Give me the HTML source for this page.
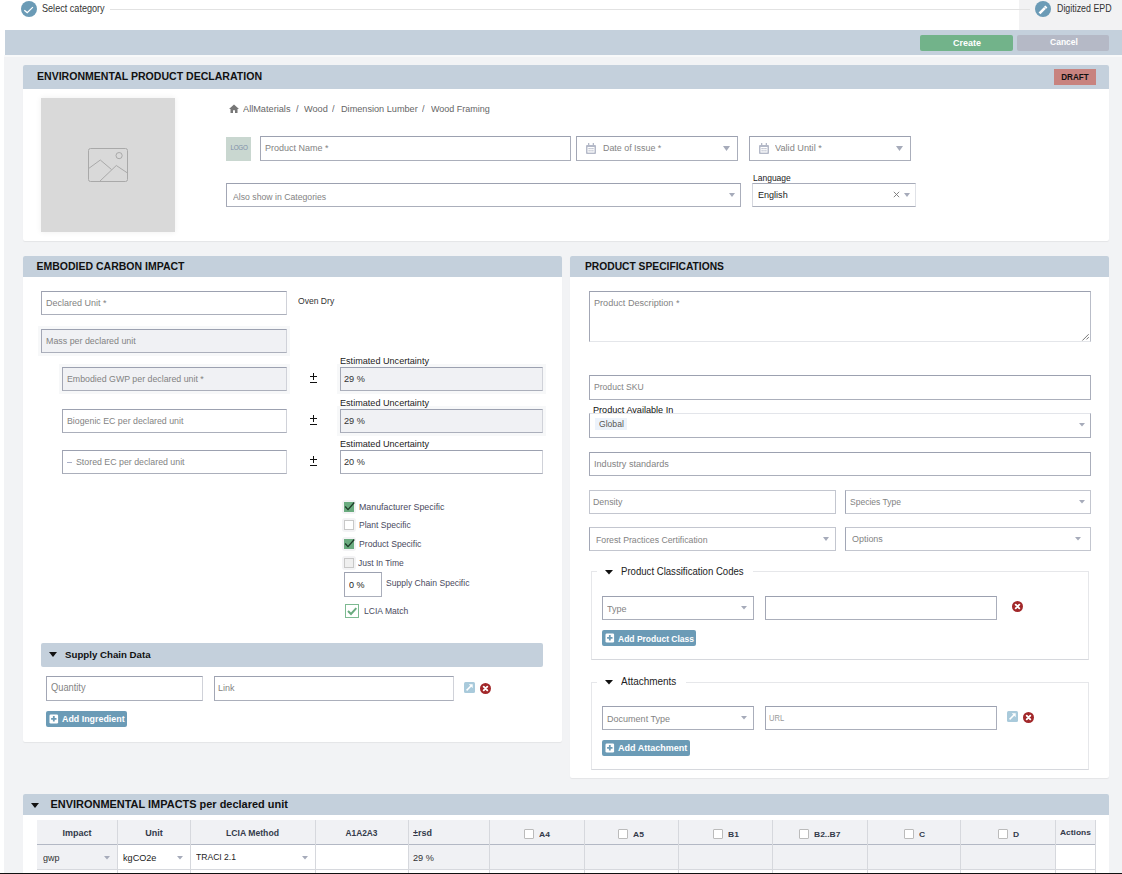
<!DOCTYPE html>
<html><head><meta charset="utf-8"><title>EPD</title>
<style>
html,body{margin:0;padding:0;}
body{width:1122px;height:874px;overflow:hidden;position:relative;background:#fff;font-family:"Liberation Sans",sans-serif;}
div{position:absolute;}
.t{position:absolute;line-height:1;white-space:pre;font-family:"Liberation Sans",sans-serif;}
svg{position:absolute;}
</style></head><body>
<div style="left:1019px;top:0px;width:103px;height:30px;background:#f2f2f3"></div>
<div style="left:110px;top:9px;width:920px;height:1px;background:#e2e2e2"></div>
<svg style="position:absolute;left:21px;top:1px" width="16" height="16" viewBox="0 0 16 16"><circle cx="8" cy="8" r="8" fill="#6b9bb6"/><path d="M3.3 9.3L6.2 11.6L11.9 6.1" stroke="#fff" stroke-width="1.3" fill="none"/></svg>
<span class="t" style="left:42px;top:4.14px;font-size:10.46px;font-weight:400;color:#333;transform:scaleX(0.8696);transform-origin:0 0;">Select category</span>
<svg style="position:absolute;left:1035px;top:1px" width="16" height="16" viewBox="0 0 16 16"><circle cx="8" cy="8" r="8" fill="#6b9bb6"/><path d="M4.5 12.3L10 6.8" stroke="#fff" stroke-width="2.6"/><path d="M10.3 4.4L12.4 6.5L11.2 7.7L9.1 5.6Z" fill="#fff"/></svg>
<span class="t" style="left:1057px;top:4.38px;font-size:10.18px;font-weight:400;color:#333;transform:scaleX(0.8696);transform-origin:0 0;">Digitized EPD</span>
<div style="left:4px;top:57px;width:1118px;height:817px;background:#f2f3f5"></div>
<div style="left:5px;top:30px;width:1117px;height:25px;background:#c4d0dc"></div>
<div style="left:4px;top:55px;width:1118px;height:2px;background:#f8f9fa"></div>
<div style="left:920px;top:35px;width:93px;height:16px;background:#72b38a;border-radius:2px"></div>
<span class="t" style="left:766.5px;width:400px;text-align:center;top:37.62px;font-size:9.90px;font-weight:700;color:#fff;transform:scaleX(0.9091);transform-origin:50% 0;">Create</span>
<div style="left:1017px;top:35px;width:92px;height:16px;background:#b5b9c6;border-radius:2px"></div>
<span class="t" style="left:863.5px;width:400px;text-align:center;top:38.09px;font-size:9.35px;font-weight:700;color:#fff;transform:scaleX(0.9091);transform-origin:50% 0;">Cancel</span>
<div style="left:23px;top:65px;width:1086px;height:176px;background:#fff;border-radius:2px;box-shadow:0 1px 1px rgba(0,0,0,0.06)"></div>
<div style="left:23px;top:65px;width:1086px;height:24px;background:#c4d0dc;border-radius:2px 2px 0 0"></div>
<span class="t" style="left:37px;top:71.07px;font-size:10.55px;font-weight:700;color:#111;">ENVIRONMENTAL PRODUCT DECLARATION</span>
<div style="left:1054px;top:69px;width:42px;height:16px;background:#c8837f"></div>
<span class="t" style="left:875px;width:400px;text-align:center;top:72.73px;font-size:8.59px;font-weight:700;color:#111;transform:scaleX(0.9434);transform-origin:50% 0;">DRAFT</span>
<div style="left:41px;top:98px;width:134px;height:134px;background:#d9d9d9;box-shadow:0 0 6px rgba(0,0,0,0.07)"></div>
<svg style="position:absolute;left:88px;top:148px" width="40" height="34" viewBox="0 0 40 34"><rect x="0.5" y="0.5" width="39" height="33" rx="2" fill="none" stroke="#a9a9a9" stroke-width="1"/><circle cx="31.1" cy="7.6" r="3.1" fill="none" stroke="#a9a9a9"/><path d="M0.5 20.6L12.3 12L23.5 21.5" fill="none" stroke="#a9a9a9"/><path d="M11.5 33.5L28.3 17.5L39.5 25" fill="none" stroke="#a9a9a9"/></svg>
<svg style="position:absolute;left:229px;top:104px" width="10" height="9" viewBox="0 0 10 9"><path d="M5 0.5L0 5H1.5V9H4V6.2H6V9H8.5V5H10Z" fill="#777"/></svg>
<span class="t" style="left:243px;top:104.09px;font-size:9.94px;font-weight:400;color:#666;transform:scaleX(0.9259);transform-origin:0 0;">AllMaterials</span>
<span class="t" style="left:296px;top:104.09px;font-size:9.94px;font-weight:400;color:#666;transform:scaleX(0.9259);transform-origin:0 0;">/</span>
<span class="t" style="left:304px;top:104.09px;font-size:9.94px;font-weight:400;color:#666;transform:scaleX(0.9259);transform-origin:0 0;">Wood</span>
<span class="t" style="left:332px;top:104.09px;font-size:9.94px;font-weight:400;color:#666;transform:scaleX(0.9259);transform-origin:0 0;">/</span>
<span class="t" style="left:340.5px;top:104.13px;font-size:9.88px;font-weight:400;color:#666;transform:scaleX(0.9259);transform-origin:0 0;">Dimension Lumber</span>
<span class="t" style="left:422px;top:104.09px;font-size:9.94px;font-weight:400;color:#666;transform:scaleX(0.9259);transform-origin:0 0;">/</span>
<span class="t" style="left:430.5px;top:104.27px;font-size:9.72px;font-weight:400;color:#666;transform:scaleX(0.9259);transform-origin:0 0;">Wood Framing</span>
<div style="left:226px;top:137px;width:25px;height:24px;background:#c9d7d0"></div>
<span class="t" style="left:38.5px;width:400px;text-align:center;top:145.24px;font-size:6.80px;font-weight:400;color:#7f8fa9;transform:scaleX(0.9259);transform-origin:50% 0;letter-spacing:-0.3px">LOGO</span>
<div style="left:260px;top:136px;width:311px;height:25px;box-sizing:border-box;border:1px solid #9ca1b0;border-left-color:#a3a7b5;border-bottom-color:#abafbb;border-right-color:#aaaebb;background:#fff;"></div>
<span class="t" style="left:264.5px;top:143.27px;font-size:9.72px;font-weight:400;color:#838383;transform:scaleX(0.9259);transform-origin:0 0;">Product Name *</span>
<div style="left:576px;top:136px;width:162px;height:25px;box-sizing:border-box;border:1px solid #9ca1b0;border-left-color:#a3a7b5;border-bottom-color:#abafbb;border-right-color:#aaaebb;background:#fff;"></div>
<svg style="position:absolute;left:586px;top:143px" width="10" height="11" viewBox="0 0 10 11"><rect x="0" y="2" width="10" height="9" rx="1" fill="#b4b9c8"/><rect x="1.5" y="4" width="7" height="5.6" fill="#fff"/><rect x="2" y="0" width="1.3" height="3" fill="#b4b9c8"/><rect x="6.7" y="0" width="1.3" height="3" fill="#b4b9c8"/><rect x="2.5" y="5.0" width="1.2" height="1.2" fill="#aeb3c3"/><rect x="2.5" y="7.2" width="1.2" height="1.2" fill="#aeb3c3"/><rect x="4.4" y="5.0" width="1.2" height="1.2" fill="#aeb3c3"/><rect x="4.4" y="7.2" width="1.2" height="1.2" fill="#aeb3c3"/><rect x="6.3" y="5.0" width="1.2" height="1.2" fill="#aeb3c3"/><rect x="6.3" y="7.2" width="1.2" height="1.2" fill="#aeb3c3"/></svg>
<span class="t" style="left:603px;top:143.36px;font-size:9.61px;font-weight:400;color:#838383;transform:scaleX(0.9259);transform-origin:0 0;">Date of Issue *</span>
<svg style="position:absolute;left:723px;top:146px" width="7" height="5" viewBox="0 0 7 5"><path d="M0 0H7L3.5 5Z" fill="#a6abba"/></svg>
<div style="left:749px;top:136px;width:162px;height:25px;box-sizing:border-box;border:1px solid #9ca1b0;border-left-color:#a3a7b5;border-bottom-color:#abafbb;border-right-color:#aaaebb;background:#fff;"></div>
<svg style="position:absolute;left:759px;top:143px" width="10" height="11" viewBox="0 0 10 11"><rect x="0" y="2" width="10" height="9" rx="1" fill="#b4b9c8"/><rect x="1.5" y="4" width="7" height="5.6" fill="#fff"/><rect x="2" y="0" width="1.3" height="3" fill="#b4b9c8"/><rect x="6.7" y="0" width="1.3" height="3" fill="#b4b9c8"/><rect x="2.5" y="5.0" width="1.2" height="1.2" fill="#aeb3c3"/><rect x="2.5" y="7.2" width="1.2" height="1.2" fill="#aeb3c3"/><rect x="4.4" y="5.0" width="1.2" height="1.2" fill="#aeb3c3"/><rect x="4.4" y="7.2" width="1.2" height="1.2" fill="#aeb3c3"/><rect x="6.3" y="5.0" width="1.2" height="1.2" fill="#aeb3c3"/><rect x="6.3" y="7.2" width="1.2" height="1.2" fill="#aeb3c3"/></svg>
<span class="t" style="left:775px;top:143.09px;font-size:9.94px;font-weight:400;color:#838383;transform:scaleX(0.9259);transform-origin:0 0;">Valid Until *</span>
<svg style="position:absolute;left:896px;top:146px" width="7" height="5" viewBox="0 0 7 5"><path d="M0 0H7L3.5 5Z" fill="#a6abba"/></svg>
<div style="left:226px;top:183px;width:515px;height:24px;box-sizing:border-box;border:1px solid #9ca1b0;border-left-color:#a3a7b5;border-bottom-color:#abafbb;border-right-color:#aaaebb;background:#fff;"></div>
<span class="t" style="left:233px;top:191.55px;font-size:9.40px;font-weight:400;color:#838383;transform:scaleX(0.9259);transform-origin:0 0;">Also show in Categories</span>
<svg style="position:absolute;left:729px;top:193px" width="6" height="4" viewBox="0 0 6 4"><path d="M0 0H6L3.0 4Z" fill="#a6abba"/></svg>
<div style="left:752px;top:183px;width:164px;height:24px;box-sizing:border-box;border:1px solid #9ca1b0;border-left-color:#a3a7b5;border-bottom-color:#abafbb;border-right-color:#aaaebb;background:#fff;border-left-color:#d5d7de;border-right-color:#e0e2e7;border-top-color:#a7abb9"></div>
<span class="t" style="left:752.5px;top:173.73px;font-size:9.18px;font-weight:400;color:#222;transform:scaleX(0.9259);transform-origin:0 0;">Language</span>
<span class="t" style="left:758px;top:190.23px;font-size:9.77px;font-weight:400;color:#222;transform:scaleX(0.9259);transform-origin:0 0;">English</span>
<svg style="position:absolute;left:893px;top:191px" width="7" height="7" viewBox="0 0 7 7"><path d="M0.8 0.8L6.2 6.2M6.2 0.8L0.8 6.2" stroke="#777" stroke-width="0.9"/></svg>
<svg style="position:absolute;left:904px;top:193px" width="6" height="4" viewBox="0 0 6 4"><path d="M0 0H6L3.0 4Z" fill="#a6abba"/></svg>
<div style="left:23px;top:256px;width:539px;height:486px;background:#fff;border-radius:2px;box-shadow:0 1px 1px rgba(0,0,0,0.06)"></div>
<div style="left:23px;top:256px;width:539px;height:21px;background:#c4d0dc;border-radius:2px 2px 0 0"></div>
<span class="t" style="left:36.5px;top:261.11px;font-size:10.50px;font-weight:700;color:#111;">EMBODIED CARBON IMPACT</span>
<div style="left:41px;top:291px;width:246px;height:24px;box-sizing:border-box;border:1px solid #9ca1b0;border-left-color:#a3a7b5;border-bottom-color:#abafbb;border-right-color:#aaaebb;background:#fff;border-right-color:#d0d2d9"></div>
<span class="t" style="left:45.5px;top:298.27px;font-size:9.72px;font-weight:400;color:#838383;transform:scaleX(0.9259);transform-origin:0 0;">Declared Unit *</span>
<span class="t" style="left:297.5px;top:296.67px;font-size:9.26px;font-weight:400;color:#333;transform:scaleX(0.9259);transform-origin:0 0;">Oven Dry</span>
<div style="left:38px;top:326px;width:252px;height:30px;background:#f7f8f9"></div>
<div style="left:41px;top:329px;width:246px;height:24px;box-sizing:border-box;border:1px solid #9ca1b0;border-left-color:#a3a7b5;border-bottom-color:#abafbb;border-right-color:#aaaebb;background:#f0f1f4;border-right-color:#d0d2d9"></div>
<span class="t" style="left:45.5px;top:336.38px;font-size:9.59px;font-weight:400;color:#838383;transform:scaleX(0.9259);transform-origin:0 0;">Mass per declared unit</span>
<div style="left:59px;top:364px;width:231px;height:30px;background:#f7f8f9"></div>
<div style="left:62px;top:367px;width:225px;height:24px;box-sizing:border-box;border:1px solid #9ca1b0;border-left-color:#a3a7b5;border-bottom-color:#abafbb;border-right-color:#aaaebb;background:#f0f1f4;border-right-color:#d0d2d9"></div>
<span class="t" style="left:66.5px;top:374.45px;font-size:9.50px;font-weight:400;color:#838383;transform:scaleX(0.9259);transform-origin:0 0;">Embodied GWP per declared unit *</span>
<div style="left:310px;top:376px;width:7px;height:1px;background:#111"></div>
<div style="left:313px;top:373px;width:1px;height:7px;background:#111"></div>
<div style="left:310px;top:382px;width:7px;height:1px;background:#111"></div>
<div style="left:62px;top:409px;width:225px;height:24px;box-sizing:border-box;border:1px solid #9ca1b0;border-left-color:#a3a7b5;border-bottom-color:#abafbb;border-right-color:#aaaebb;background:#fff;border-right-color:#d0d2d9"></div>
<span class="t" style="left:66.5px;top:416.45px;font-size:9.50px;font-weight:400;color:#838383;transform:scaleX(0.9259);transform-origin:0 0;">Biogenic EC per declared unit</span>
<div style="left:310px;top:418px;width:7px;height:1px;background:#111"></div>
<div style="left:313px;top:415px;width:1px;height:7px;background:#111"></div>
<div style="left:310px;top:424px;width:7px;height:1px;background:#111"></div>
<div style="left:62px;top:450px;width:225px;height:24px;box-sizing:border-box;border:1px solid #9ca1b0;border-left-color:#a3a7b5;border-bottom-color:#abafbb;border-right-color:#aaaebb;background:#fff;border-right-color:#d0d2d9"></div>
<span class="t" style="left:76px;top:457.45px;font-size:9.50px;font-weight:400;color:#838383;transform:scaleX(0.9259);transform-origin:0 0;">Stored EC per declared unit</span>
<div style="left:310px;top:459px;width:7px;height:1px;background:#111"></div>
<div style="left:313px;top:456px;width:1px;height:7px;background:#111"></div>
<div style="left:310px;top:465px;width:7px;height:1px;background:#111"></div>
<div style="left:337px;top:364px;width:209px;height:30px;background:#f7f8f9"></div>
<div style="left:340px;top:367px;width:203px;height:24px;box-sizing:border-box;border:1px solid #9ca1b0;border-left-color:#a3a7b5;border-bottom-color:#abafbb;border-right-color:#aaaebb;background:#f0f1f4;border-right-color:#d0d2d9"></div>
<span class="t" style="left:340px;top:356.18px;font-size:9.83px;font-weight:400;color:#222;transform:scaleX(0.9259);transform-origin:0 0;">Estimated Uncertainty</span>
<span class="t" style="left:343.5px;top:374.09px;font-size:9.94px;font-weight:400;color:#333;transform:scaleX(0.9259);transform-origin:0 0;">29 %</span>
<div style="left:337px;top:406px;width:209px;height:30px;background:#f7f8f9"></div>
<div style="left:340px;top:409px;width:203px;height:24px;box-sizing:border-box;border:1px solid #9ca1b0;border-left-color:#a3a7b5;border-bottom-color:#abafbb;border-right-color:#aaaebb;background:#f0f1f4;border-right-color:#d0d2d9"></div>
<span class="t" style="left:340px;top:398.18px;font-size:9.83px;font-weight:400;color:#222;transform:scaleX(0.9259);transform-origin:0 0;">Estimated Uncertainty</span>
<span class="t" style="left:343.5px;top:416.09px;font-size:9.94px;font-weight:400;color:#333;transform:scaleX(0.9259);transform-origin:0 0;">29 %</span>
<div style="left:340px;top:450px;width:203px;height:24px;box-sizing:border-box;border:1px solid #9ca1b0;border-left-color:#a3a7b5;border-bottom-color:#abafbb;border-right-color:#aaaebb;background:#fff;border-right-color:#d0d2d9"></div>
<span class="t" style="left:340px;top:439.18px;font-size:9.83px;font-weight:400;color:#222;transform:scaleX(0.9259);transform-origin:0 0;">Estimated Uncertainty</span>
<span class="t" style="left:343.5px;top:457.09px;font-size:9.94px;font-weight:400;color:#333;transform:scaleX(0.9259);transform-origin:0 0;">20 %</span>
<div style="left:67px;top:462px;width:5px;height:1px;background:#aab0c8"></div>
<div style="left:342px;top:500px;width:14px;height:14px;background:#f3f3f5;border-radius:3px"></div>
<div style="left:344px;top:502px;width:10px;height:10px;box-sizing:border-box;background:#6aab7f;border:1px solid #6aab7f"></div>
<svg style="position:absolute;left:344px;top:501px" width="11" height="11" viewBox="0 0 11 11"><path d="M1.2 5.5L4 8.6L10.3 1.5" stroke="#1d3a28" stroke-width="1.3" fill="none"/></svg>
<span class="t" style="left:358.5px;top:502.42px;font-size:9.55px;font-weight:400;color:#4a4a5e;transform:scaleX(0.9259);transform-origin:0 0;">Manufacturer Specific</span>
<div style="left:342px;top:518px;width:14px;height:14px;background:#f3f3f5;border-radius:3px"></div>
<div style="left:344px;top:520px;width:10px;height:10px;box-sizing:border-box;background:#fff;border:1px solid #c8c8c8"></div>
<span class="t" style="left:358.5px;top:520.68px;font-size:9.23px;font-weight:400;color:#4a4a5e;transform:scaleX(0.9259);transform-origin:0 0;">Plant Specific</span>
<div style="left:342px;top:537px;width:14px;height:14px;background:#f3f3f5;border-radius:3px"></div>
<div style="left:344px;top:539px;width:10px;height:10px;box-sizing:border-box;background:#6aab7f;border:1px solid #6aab7f"></div>
<svg style="position:absolute;left:344px;top:538px" width="11" height="11" viewBox="0 0 11 11"><path d="M1.2 5.5L4 8.6L10.3 1.5" stroke="#1d3a28" stroke-width="1.3" fill="none"/></svg>
<span class="t" style="left:358.5px;top:539.59px;font-size:9.34px;font-weight:400;color:#4a4a5e;transform:scaleX(0.9259);transform-origin:0 0;">Product Specific</span>
<div style="left:342px;top:556px;width:14px;height:14px;background:#f3f3f5;border-radius:3px"></div>
<div style="left:344px;top:558px;width:10px;height:10px;box-sizing:border-box;background:#efefef;border:1px solid #c8c8c8"></div>
<span class="t" style="left:358px;top:558.72px;font-size:9.19px;font-weight:400;color:#4a4a5e;transform:scaleX(0.9259);transform-origin:0 0;">Just In Time</span>
<div style="left:344px;top:572px;width:38px;height:25px;box-sizing:border-box;border:1px solid #9ca1b0;border-left-color:#a3a7b5;border-bottom-color:#abafbb;border-right-color:#aaaebb;background:#fff;"></div>
<span class="t" style="left:348.5px;top:579.77px;font-size:9.72px;font-weight:400;color:#222;transform:scaleX(0.9259);transform-origin:0 0;">0 %</span>
<span class="t" style="left:385.5px;top:579.16px;font-size:9.27px;font-weight:400;color:#4a4a5e;transform:scaleX(0.9259);transform-origin:0 0;">Supply Chain Specific</span>
<div style="left:345px;top:604px;width:14px;height:14px;box-sizing:border-box;border:1px solid #7dba91;background:#fff"></div>
<svg style="position:absolute;left:345px;top:604px" width="14" height="14" viewBox="0 0 14 14"><path d="M3 7L6 10L11.3 4.2" stroke="#6aab7f" stroke-width="2" fill="none"/></svg>
<span class="t" style="left:363.5px;top:606.67px;font-size:9.26px;font-weight:400;color:#4a4a5e;transform:scaleX(0.9259);transform-origin:0 0;">LCIA Match</span>
<div style="left:41px;top:643px;width:502px;height:23.5px;background:#c4d0dc;border-radius:2px"></div>
<svg style="position:absolute;left:49px;top:652px" width="8" height="5" viewBox="0 0 8 5"><path d="M0 0H8L4.0 5Z" fill="#111"/></svg>
<span class="t" style="left:65px;top:649.79px;font-size:9.70px;font-weight:700;color:#111;">Supply Chain Data</span>
<div style="left:46px;top:676px;width:157px;height:25px;box-sizing:border-box;border:1px solid #9ca1b0;border-left-color:#a3a7b5;border-bottom-color:#abafbb;border-right-color:#aaaebb;background:#fff;border-right-color:#d0d2d9"></div>
<span class="t" style="left:50.5px;top:683.00px;font-size:10.04px;font-weight:400;color:#838383;transform:scaleX(0.9259);transform-origin:0 0;">Quantity</span>
<div style="left:214px;top:676px;width:239.5px;height:25px;box-sizing:border-box;border:1px solid #9ca1b0;border-left-color:#a3a7b5;border-bottom-color:#abafbb;border-right-color:#aaaebb;background:#fff;border-right-color:#d0d2d9"></div>
<span class="t" style="left:218px;top:683.27px;font-size:9.72px;font-weight:400;color:#838383;transform:scaleX(0.9259);transform-origin:0 0;">Link</span>
<svg style="position:absolute;left:464px;top:682px" width="11" height="11" viewBox="0 0 11 11"><rect width="11" height="11" rx="1.5" fill="#a9cadb"/><path d="M2.6 8.4L7.2 3.8" stroke="#fff" stroke-width="1.5"/><path d="M4.8 2.3H8.7V6.2Z" fill="#fff"/></svg>
<svg style="position:absolute;left:480px;top:683px" width="11" height="11" viewBox="0 0 11 11"><circle cx="5.5" cy="5.5" r="5.5" fill="#a2282a"/><path d="M3.7 3.7L7.3 7.3M7.3 3.7L3.7 7.3" stroke="#fff" stroke-width="1.9" stroke-linecap="round"/></svg>
<div style="left:46px;top:711px;width:81px;height:16px;background:#6b9bb6;border-radius:2px"></div>
<svg style="position:absolute;left:49px;top:714px" width="12" height="12" viewBox="0 0 12 12"><rect x="0.5" y="0.4" width="8.6" height="9.2" rx="1.3" fill="#fff"/><path d="M4.8 2.1V7.5M2.1 4.8H7.5" stroke="#6b9bb6" stroke-width="1.8"/></svg>
<span class="t" style="left:62px;top:715.47px;font-size:8.90px;font-weight:700;color:#fff;">Add Ingredient</span>
<div style="left:570px;top:256px;width:539px;height:522px;background:#fff;border-radius:2px;box-shadow:0 1px 1px rgba(0,0,0,0.06)"></div>
<div style="left:570px;top:256px;width:539px;height:21px;background:#c4d0dc;border-radius:2px 2px 0 0"></div>
<span class="t" style="left:585px;top:261.91px;font-size:10.27px;font-weight:700;color:#111;">PRODUCT SPECIFICATIONS</span>
<div style="left:589px;top:291px;width:502px;height:51px;box-sizing:border-box;border:1px solid #9ca1b0;border-left-color:#a3a7b5;border-bottom-color:#abafbb;border-right-color:#aaaebb;background:#fff;border-right-color:#b9bdc8;border-bottom-color:#e4e6ea"></div>
<span class="t" style="left:593.5px;top:298.18px;font-size:9.83px;font-weight:400;color:#838383;transform:scaleX(0.9259);transform-origin:0 0;">Product Description *</span>
<svg style="position:absolute;left:1080px;top:332px" width="10" height="10" viewBox="0 0 10 10"><path d="M2.4 8.5L8.7 2.2M6.5 7.4L8.8 5.1" stroke="#666" stroke-width="0.9"/></svg>
<div style="left:589px;top:375px;width:502px;height:24.5px;box-sizing:border-box;border:1px solid #9ca1b0;border-left-color:#a3a7b5;border-bottom-color:#abafbb;border-right-color:#aaaebb;background:#fff;"></div>
<span class="t" style="left:593.5px;top:383.14px;font-size:9.29px;font-weight:400;color:#838383;transform:scaleX(0.9259);transform-origin:0 0;">Product SKU</span>
<div style="left:589px;top:413px;width:502px;height:25px;box-sizing:border-box;border:1px solid #9ca1b0;border-left-color:#a3a7b5;border-bottom-color:#abafbb;border-right-color:#aaaebb;background:#fff;border-top-color:#e3e5ea"></div>
<span class="t" style="left:592.5px;top:404.68px;font-size:9.83px;font-weight:400;color:#111;transform:scaleX(0.9259);transform-origin:0 0;">Product Available In</span>
<div style="left:595px;top:418px;width:32px;height:12px;background:#edf3fb"></div>
<span class="t" style="left:599px;top:419.64px;font-size:9.29px;font-weight:400;color:#555;transform:scaleX(0.9259);transform-origin:0 0;">Global</span>
<svg style="position:absolute;left:1079px;top:423px" width="6" height="3.5" viewBox="0 0 6 3.5"><path d="M0 0H6L3.0 3.5Z" fill="#a6abba"/></svg>
<div style="left:589px;top:452px;width:502px;height:24px;box-sizing:border-box;border:1px solid #9ca1b0;border-left-color:#a3a7b5;border-bottom-color:#abafbb;border-right-color:#aaaebb;background:#fff;"></div>
<span class="t" style="left:593.5px;top:459.18px;font-size:9.83px;font-weight:400;color:#838383;transform:scaleX(0.9259);transform-origin:0 0;">Industry standards</span>
<div style="left:589px;top:490px;width:247px;height:24px;box-sizing:border-box;border:1px solid #9ca1b0;border-left-color:#a3a7b5;border-bottom-color:#abafbb;border-right-color:#aaaebb;background:#fff;border-color:#c3c6cf"></div>
<span class="t" style="left:593px;top:497.45px;font-size:9.50px;font-weight:400;color:#838383;transform:scaleX(0.9259);transform-origin:0 0;">Density</span>
<div style="left:845px;top:490px;width:246px;height:24px;box-sizing:border-box;border:1px solid #9ca1b0;border-left-color:#a3a7b5;border-bottom-color:#abafbb;border-right-color:#aaaebb;background:#fff;border-color:#c3c6cf;border-left-color:#a2a7b6"></div>
<span class="t" style="left:850px;top:497.68px;font-size:9.23px;font-weight:400;color:#838383;transform:scaleX(0.9259);transform-origin:0 0;">Species Type</span>
<svg style="position:absolute;left:1079px;top:500px" width="6" height="3.5" viewBox="0 0 6 3.5"><path d="M0 0H6L3.0 3.5Z" fill="#a6abba"/></svg>
<div style="left:589px;top:526.5px;width:247px;height:24px;box-sizing:border-box;border:1px solid #9ca1b0;border-left-color:#a3a7b5;border-bottom-color:#abafbb;border-right-color:#aaaebb;background:#fff;border-color:#c3c6cf;border-left-color:#a2a7b6"></div>
<span class="t" style="left:596px;top:534.51px;font-size:9.44px;font-weight:400;color:#838383;transform:scaleX(0.9259);transform-origin:0 0;">Forest Practices Certification</span>
<svg style="position:absolute;left:823px;top:537px" width="6" height="4" viewBox="0 0 6 4"><path d="M0 0H6L3.0 4Z" fill="#a6abba"/></svg>
<div style="left:845px;top:526.5px;width:246px;height:24px;box-sizing:border-box;border:1px solid #9ca1b0;border-left-color:#a3a7b5;border-bottom-color:#abafbb;border-right-color:#aaaebb;background:#fff;border-color:#c3c6cf;border-left-color:#a2a7b6"></div>
<span class="t" style="left:852px;top:534.33px;font-size:9.66px;font-weight:400;color:#838383;transform:scaleX(0.9259);transform-origin:0 0;">Options</span>
<svg style="position:absolute;left:1075px;top:537px" width="6" height="3.5" viewBox="0 0 6 3.5"><path d="M0 0H6L3.0 3.5Z" fill="#a6abba"/></svg>
<div style="left:591px;top:571px;width:498px;height:88.5px;box-sizing:border-box;border:1px solid #e6e7ea;border-bottom-color:#d6d8dd"></div>
<div style="left:597px;top:568px;width:156px;height:8px;background:#fff"></div>
<svg style="position:absolute;left:605px;top:570px" width="8" height="4.5" viewBox="0 0 8 4.5"><path d="M0 0H8L4.0 4.5Z" fill="#111"/></svg>
<span class="t" style="left:621px;top:566.72px;font-size:10.37px;font-weight:400;color:#222;transform:scaleX(0.9259);transform-origin:0 0;">Product Classification Codes</span>
<div style="left:602px;top:595.5px;width:152px;height:24px;box-sizing:border-box;border:1px solid #9ca1b0;border-left-color:#a3a7b5;border-bottom-color:#abafbb;border-right-color:#aaaebb;background:#fff;"></div>
<span class="t" style="left:607px;top:603.77px;font-size:9.72px;font-weight:400;color:#838383;transform:scaleX(0.9259);transform-origin:0 0;">Type</span>
<svg style="position:absolute;left:741px;top:606px" width="6" height="3.5" viewBox="0 0 6 3.5"><path d="M0 0H6L3.0 3.5Z" fill="#a6abba"/></svg>
<div style="left:765px;top:595.5px;width:232px;height:24px;box-sizing:border-box;border:1px solid #9ca1b0;border-left-color:#a3a7b5;border-bottom-color:#abafbb;border-right-color:#aaaebb;background:#fff;"></div>
<svg style="position:absolute;left:1012px;top:601px" width="11" height="11" viewBox="0 0 11 11"><circle cx="5.5" cy="5.5" r="5.5" fill="#a2282a"/><path d="M3.7 3.7L7.3 7.3M7.3 3.7L3.7 7.3" stroke="#fff" stroke-width="1.9" stroke-linecap="round"/></svg>
<div style="left:602px;top:630px;width:94px;height:16px;background:#6b9bb6;border-radius:2px"></div>
<svg style="position:absolute;left:605px;top:633px" width="12" height="12" viewBox="0 0 12 12"><rect x="0.5" y="0.4" width="8.6" height="9.2" rx="1.3" fill="#fff"/><path d="M4.8 2.1V7.5M2.1 4.8H7.5" stroke="#6b9bb6" stroke-width="1.8"/></svg>
<span class="t" style="left:618px;top:634.80px;font-size:8.50px;font-weight:700;color:#fff;">Add Product Class</span>
<div style="left:591px;top:681.5px;width:498px;height:88px;box-sizing:border-box;border:1px solid #e6e7ea;border-bottom-color:#d6d8dd"></div>
<div style="left:597px;top:678px;width:89px;height:8px;background:#fff"></div>
<svg style="position:absolute;left:605px;top:680px" width="8" height="4.5" viewBox="0 0 8 4.5"><path d="M0 0H8L4.0 4.5Z" fill="#111"/></svg>
<span class="t" style="left:621px;top:676.40px;font-size:10.75px;font-weight:400;color:#222;transform:scaleX(0.9259);transform-origin:0 0;">Attachments</span>
<div style="left:602px;top:705.5px;width:152px;height:24px;box-sizing:border-box;border:1px solid #9ca1b0;border-left-color:#a3a7b5;border-bottom-color:#abafbb;border-right-color:#aaaebb;background:#fff;"></div>
<span class="t" style="left:607px;top:713.74px;font-size:9.75px;font-weight:400;color:#838383;transform:scaleX(0.9259);transform-origin:0 0;">Document Type</span>
<svg style="position:absolute;left:741px;top:716px" width="6" height="3.5" viewBox="0 0 6 3.5"><path d="M0 0H6L3.0 3.5Z" fill="#a6abba"/></svg>
<div style="left:765px;top:705.5px;width:232px;height:24px;box-sizing:border-box;border:1px solid #9ca1b0;border-left-color:#a3a7b5;border-bottom-color:#abafbb;border-right-color:#aaaebb;background:#fff;"></div>
<span class="t" style="left:768.5px;top:714.55px;font-size:8.21px;font-weight:400;color:#9a9a9a;transform:scaleX(0.9259);transform-origin:0 0;">URL</span>
<svg style="position:absolute;left:1007px;top:711px" width="11" height="11" viewBox="0 0 11 11"><rect width="11" height="11" rx="1.5" fill="#a9cadb"/><path d="M2.6 8.4L7.2 3.8" stroke="#fff" stroke-width="1.5"/><path d="M4.8 2.3H8.7V6.2Z" fill="#fff"/></svg>
<svg style="position:absolute;left:1023px;top:712px" width="11" height="11" viewBox="0 0 11 11"><circle cx="5.5" cy="5.5" r="5.5" fill="#a2282a"/><path d="M3.7 3.7L7.3 7.3M7.3 3.7L3.7 7.3" stroke="#fff" stroke-width="1.9" stroke-linecap="round"/></svg>
<div style="left:602px;top:740px;width:88px;height:16px;background:#6b9bb6;border-radius:2px"></div>
<svg style="position:absolute;left:605px;top:743px" width="12" height="12" viewBox="0 0 12 12"><rect x="0.5" y="0.4" width="8.6" height="9.2" rx="1.3" fill="#fff"/><path d="M4.8 2.1V7.5M2.1 4.8H7.5" stroke="#6b9bb6" stroke-width="1.8"/></svg>
<span class="t" style="left:618px;top:744.38px;font-size:9.00px;font-weight:700;color:#fff;">Add Attachment</span>
<div style="left:23px;top:794px;width:1086px;height:80px;background:#fff;border-radius:2px 2px 0 0"></div>
<div style="left:23px;top:794px;width:1086px;height:21px;background:#c4d0dc;border-radius:2px 2px 0 0"></div>
<svg style="position:absolute;left:31px;top:803px" width="8" height="5" viewBox="0 0 8 5"><path d="M0 0H8L4.0 5Z" fill="#111"/></svg>
<span class="t" style="left:50.5px;top:799.22px;font-size:10.96px;font-weight:700;color:#111;">ENVIRONMENTAL IMPACTS per declared unit</span>
<div style="left:37px;top:820px;width:1058.5px;height:50px;background:#f0f1f4"></div>
<div style="left:117px;top:845px;width:73px;height:28px;background:#fff"></div>
<div style="left:190px;top:845px;width:125px;height:28px;background:#fff"></div>
<div style="left:315px;top:845px;width:93px;height:28px;background:#fff"></div>
<div style="left:1055px;top:845px;width:40.5px;height:28px;background:#fff"></div>
<div style="left:37px;top:844px;width:1058.5px;height:1px;background:#b3b8c4"></div>
<div style="left:37px;top:869px;width:1058.5px;height:1px;background:#d6d8dd"></div>
<div style="left:117px;top:820px;width:1px;height:53px;background:#d6d8dd"></div>
<div style="left:190px;top:820px;width:1px;height:53px;background:#d6d8dd"></div>
<div style="left:315px;top:820px;width:1px;height:53px;background:#d6d8dd"></div>
<div style="left:408px;top:820px;width:1px;height:53px;background:#d6d8dd"></div>
<div style="left:489px;top:820px;width:1px;height:53px;background:#d6d8dd"></div>
<div style="left:584px;top:820px;width:1px;height:53px;background:#d6d8dd"></div>
<div style="left:678px;top:820px;width:1px;height:53px;background:#d6d8dd"></div>
<div style="left:772px;top:820px;width:1px;height:53px;background:#d6d8dd"></div>
<div style="left:867px;top:820px;width:1px;height:53px;background:#d6d8dd"></div>
<div style="left:960px;top:820px;width:1px;height:53px;background:#d6d8dd"></div>
<div style="left:1055px;top:820px;width:1px;height:53px;background:#d6d8dd"></div>
<div style="left:1095px;top:820px;width:1px;height:53px;background:#d6d8dd"></div>
<span class="t" style="left:-123.0px;width:400px;text-align:center;top:828.76px;font-size:8.55px;font-weight:700;color:#333a4a;transform:scaleX(1.0526);transform-origin:50% 0;">Impact</span>
<span class="t" style="left:-46.5px;width:400px;text-align:center;top:828.76px;font-size:8.55px;font-weight:700;color:#333a4a;transform:scaleX(1.0526);transform-origin:50% 0;">Unit</span>
<span class="t" style="left:52.5px;width:400px;text-align:center;top:828.68px;font-size:8.65px;font-weight:700;color:#333a4a;">LCIA Method</span>
<span class="t" style="left:161.5px;width:400px;text-align:center;top:828.93px;font-size:8.35px;font-weight:700;color:#333a4a;">A1A2A3</span>
<span class="t" style="left:413px;top:828.91px;font-size:8.37px;font-weight:700;color:#333a4a;transform:scaleX(1.0753);transform-origin:0 0;">±rsd</span>
<div style="left:524px;top:829px;width:10px;height:10px;box-sizing:border-box;border:1px solid #bbb;background:#fff;border-radius:1px"></div>
<span class="t" style="left:539px;top:830.66px;font-size:8.07px;font-weight:700;color:#333a4a;transform:scaleX(1.0526);transform-origin:0 0;">A4</span>
<div style="left:618px;top:829px;width:10px;height:10px;box-sizing:border-box;border:1px solid #bbb;background:#fff;border-radius:1px"></div>
<span class="t" style="left:633px;top:830.66px;font-size:8.07px;font-weight:700;color:#333a4a;transform:scaleX(1.0526);transform-origin:0 0;">A5</span>
<div style="left:713px;top:829px;width:10px;height:10px;box-sizing:border-box;border:1px solid #bbb;background:#fff;border-radius:1px"></div>
<span class="t" style="left:728px;top:830.66px;font-size:8.07px;font-weight:700;color:#333a4a;transform:scaleX(1.0526);transform-origin:0 0;">B1</span>
<div style="left:799px;top:829px;width:10px;height:10px;box-sizing:border-box;border:1px solid #bbb;background:#fff;border-radius:1px"></div>
<span class="t" style="left:814px;top:830.66px;font-size:8.07px;font-weight:700;color:#333a4a;transform:scaleX(1.0526);transform-origin:0 0;">B2..B7</span>
<div style="left:904px;top:829px;width:10px;height:10px;box-sizing:border-box;border:1px solid #bbb;background:#fff;border-radius:1px"></div>
<span class="t" style="left:919px;top:830.66px;font-size:8.07px;font-weight:700;color:#333a4a;transform:scaleX(1.0526);transform-origin:0 0;">C</span>
<div style="left:998px;top:829px;width:10px;height:10px;box-sizing:border-box;border:1px solid #bbb;background:#fff;border-radius:1px"></div>
<span class="t" style="left:1013px;top:830.66px;font-size:8.07px;font-weight:700;color:#333a4a;transform:scaleX(1.0526);transform-origin:0 0;">D</span>
<span class="t" style="left:1060px;top:829.20px;font-size:8.03px;font-weight:700;color:#333a4a;transform:scaleX(1.0526);transform-origin:0 0;">Actions</span>
<span class="t" style="left:42.5px;top:852.77px;font-size:9.72px;font-weight:400;color:#333;transform:scaleX(0.9259);transform-origin:0 0;">gwp</span>
<svg style="position:absolute;left:104px;top:856px" width="6" height="3.5" viewBox="0 0 6 3.5"><path d="M0 0H6L3.0 3.5Z" fill="#a6abba"/></svg>
<span class="t" style="left:122.5px;top:852.65px;font-size:9.86px;font-weight:400;color:#222;transform:scaleX(0.9259);transform-origin:0 0;">kgCO2e</span>
<svg style="position:absolute;left:177px;top:856px" width="6" height="3.5" viewBox="0 0 6 3.5"><path d="M0 0H6L3.0 3.5Z" fill="#a6abba"/></svg>
<span class="t" style="left:196px;top:853.17px;font-size:9.26px;font-weight:400;color:#222;transform:scaleX(0.9259);transform-origin:0 0;">TRACI 2.1</span>
<svg style="position:absolute;left:302px;top:856px" width="6" height="3.5" viewBox="0 0 6 3.5"><path d="M0 0H6L3.0 3.5Z" fill="#a6abba"/></svg>
<span class="t" style="left:412.5px;top:852.59px;font-size:9.94px;font-weight:400;color:#333;transform:scaleX(0.9259);transform-origin:0 0;">29 %</span>
<div style="left:0px;top:873px;width:1122px;height:1px;background:#111"></div>
</body></html>
